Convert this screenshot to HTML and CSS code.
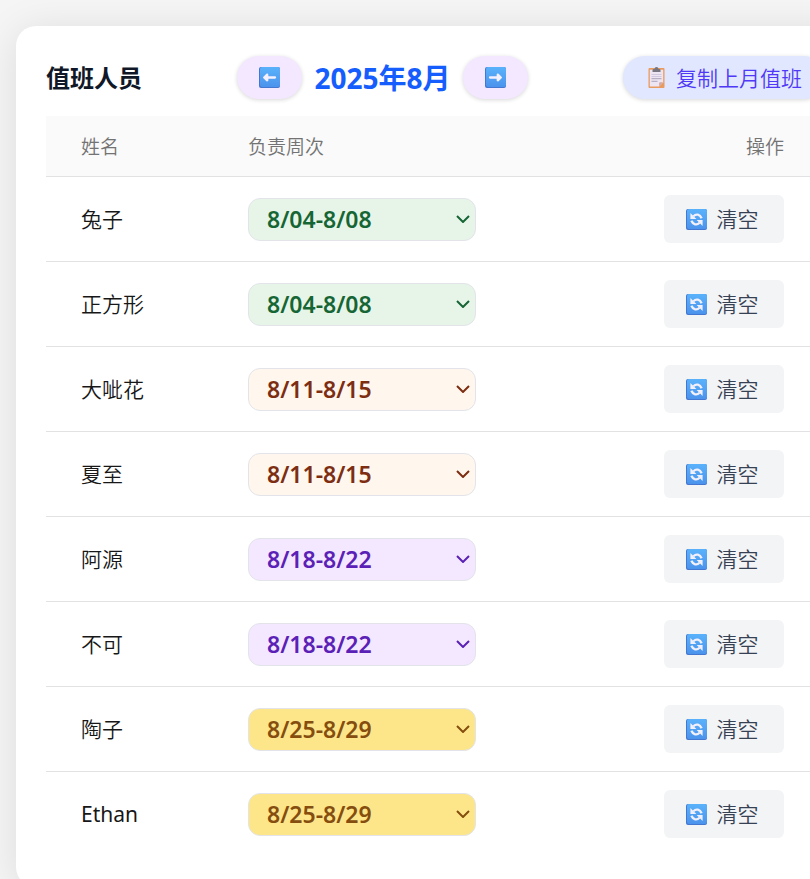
FILE: index.html
```html
<!DOCTYPE html>
<html lang="zh-CN">
<head>
<meta charset="utf-8">
<meta name="viewport" content="width=device-width, initial-scale=1">
<title>值班人员</title>
<link rel="stylesheet" href="styles.css">
</head>
<body>
<svg class="sprite" aria-hidden="true">
  <defs>
    <linearGradient id="tile" x1="0" y1="0" x2="0" y2="1">
      <stop offset="0" stop-color="#5ab2fb"/>
      <stop offset="1" stop-color="#4b93ec"/>
    </linearGradient>
    <symbol id="i-base" viewBox="0 0 21 21">
      <rect width="21" height="21" rx="2" fill="#4477cf"/>
      <rect x="1" width="20" height="20" rx="2" fill="url(#tile)"/>
    </symbol>
    <symbol id="i-left" viewBox="0 0 21 21">
      <use href="#i-base"/>
      <path d="M16 10.5H6M8.200 7.700L5.200 10.500L8.200 13.300Z" fill="#f5f0fd" stroke="#f5f0fd" stroke-width="2.300" stroke-linecap="round" stroke-linejoin="round"/>
    </symbol>
    <symbol id="i-right" viewBox="0 0 21 21">
      <use href="#i-base"/>
      <path d="M5 10.5H15M12.800 7.700L15.800 10.500L12.800 13.300Z" fill="#f5f0fd" stroke="#f5f0fd" stroke-width="2.300" stroke-linecap="round" stroke-linejoin="round"/>
    </symbol>
    <symbol id="i-cycle" viewBox="0 0 21 21">
      <use href="#i-base"/>
      <path d="M7.5 7.2C10 4.6 14 5.2 15.6 9.2M13.5 13.8C11 16.4 7 15.8 5.4 11.8" fill="none" stroke="#f2f0fb" stroke-width="2.3"/>
      <path d="M4.4 4V10H10.4ZM16.6 17V11H10.6Z" fill="#f2f0fb"/>
    </symbol>
    <symbol id="i-clip" viewBox="0 0 16 21">
      <rect y="1" width="16" height="20" rx="1" fill="#e99a5f"/>
      <path d="M1.3 2.8H14.7V15.2L10.6 19.6H1.3Z" fill="#eee5f3"/>
      <path d="M10.6 19.6V16.2Q10.6 15.2 11.6 15.2H14.7Z" fill="#cfa9a6"/>
      <path d="M4 5V3.2Q4 2 5.2 2H6Q6 0 8 0T10 2H10.800Q12 2 12 3.200V5Z" fill="#77767f"/>
      <path d="M3 7.500H13M3 9.500H13" stroke="#d0c9df" stroke-width="1.200"/>
      <path d="M3 11.700H13M3 14.300H9" stroke="#a9a2b8" stroke-width="1"/>
    </symbol>
    <symbol id="i-chevron" viewBox="0 0 14 8">
      <path d="M1 1L7 7L13 1" fill="none" stroke="currentColor" stroke-width="2"/>
    </symbol>
  </defs>
</svg>

<main class="card">
  <header class="toolbar">
    <h1 class="title">值班人员</h1>
    <nav class="month-nav" aria-label="月份">
      <button class="pill pill-nav" type="button" aria-label="上个月"><svg class="icon"><use href="#i-left"/></svg></button>
      <h2 class="month">2025年8月</h2>
      <button class="pill pill-nav" type="button" aria-label="下个月"><svg class="icon"><use href="#i-right"/></svg></button>
    </nav>
    <button class="pill pill-copy" type="button"><svg class="icon"><use href="#i-clip"/></svg><span class="btn-text">复制上月值班</span></button>
  </header>

  <table class="roster">
    <thead>
      <tr><th class="col-name" scope="col">姓名</th><th class="col-week" scope="col">负责周次</th><th class="col-action" scope="col">操作</th></tr>
    </thead>
    <tbody>
      <tr>
        <td><label for="w1">兔子</label></td>
        <td><div class="week week-green"><select id="w1"><option>8/04-8/08</option></select><svg class="chevron"><use href="#i-chevron"/></svg></div></td>
        <td class="col-action"><button class="clear" type="button"><svg class="icon"><use href="#i-cycle"/></svg><span class="btn-text">清空</span></button></td>
      </tr>
      <tr>
        <td><label for="w2">正方形</label></td>
        <td><div class="week week-green"><select id="w2"><option>8/04-8/08</option></select><svg class="chevron"><use href="#i-chevron"/></svg></div></td>
        <td class="col-action"><button class="clear" type="button"><svg class="icon"><use href="#i-cycle"/></svg><span class="btn-text">清空</span></button></td>
      </tr>
      <tr>
        <td><label for="w3">大呲花</label></td>
        <td><div class="week week-orange"><select id="w3"><option>8/11-8/15</option></select><svg class="chevron"><use href="#i-chevron"/></svg></div></td>
        <td class="col-action"><button class="clear" type="button"><svg class="icon"><use href="#i-cycle"/></svg><span class="btn-text">清空</span></button></td>
      </tr>
      <tr>
        <td><label for="w4">夏至</label></td>
        <td><div class="week week-orange"><select id="w4"><option>8/11-8/15</option></select><svg class="chevron"><use href="#i-chevron"/></svg></div></td>
        <td class="col-action"><button class="clear" type="button"><svg class="icon"><use href="#i-cycle"/></svg><span class="btn-text">清空</span></button></td>
      </tr>
      <tr>
        <td><label for="w5">阿源</label></td>
        <td><div class="week week-purple"><select id="w5"><option>8/18-8/22</option></select><svg class="chevron"><use href="#i-chevron"/></svg></div></td>
        <td class="col-action"><button class="clear" type="button"><svg class="icon"><use href="#i-cycle"/></svg><span class="btn-text">清空</span></button></td>
      </tr>
      <tr>
        <td><label for="w6">不可</label></td>
        <td><div class="week week-purple"><select id="w6"><option>8/18-8/22</option></select><svg class="chevron"><use href="#i-chevron"/></svg></div></td>
        <td class="col-action"><button class="clear" type="button"><svg class="icon"><use href="#i-cycle"/></svg><span class="btn-text">清空</span></button></td>
      </tr>
      <tr>
        <td><label for="w7">陶子</label></td>
        <td><div class="week week-yellow"><select id="w7"><option>8/25-8/29</option></select><svg class="chevron"><use href="#i-chevron"/></svg></div></td>
        <td class="col-action"><button class="clear" type="button"><svg class="icon"><use href="#i-cycle"/></svg><span class="btn-text">清空</span></button></td>
      </tr>
      <tr>
        <td><label class="latin" for="w8">Ethan</label></td>
        <td><div class="week week-yellow"><select id="w8"><option>8/25-8/29</option></select><svg class="chevron"><use href="#i-chevron"/></svg></div></td>
        <td class="col-action"><button class="clear" type="button"><svg class="icon"><use href="#i-cycle"/></svg><span class="btn-text">清空</span></button></td>
      </tr>
    </tbody>
  </table>
</main>
</body>
</html>
```
FILE: styles.css
```css
* {
  box-sizing: border-box;
}

body {
  margin: 0;
  padding: 26px 16px;
  overflow-x: hidden;
  background: #f5f5f5;
  color: #171717;
  font-family: "Noto Sans", "Noto Sans CJK SC", sans-serif;
  font-size: 21px;
}

button,
select {
  font: inherit;
  cursor: pointer;
}

.sprite {
  position: absolute;
  width: 0;
  height: 0;
}

.card {
  min-width: 839px;
  padding: 30px;
  background: #fff;
  border-radius: 20px;
  box-shadow: 0 4px 40px rgba(0, 0, 0, 0.1);
}

.toolbar {
  display: flex;
  align-items: center;
  justify-content: space-between;
  margin-bottom: 17px;
}

.title {
  margin: 0;
  color: #101828;
  font-size: 24px;
  line-height: 32px;
  font-weight: 700;
}

.month-nav {
  display: flex;
  align-items: center;
  gap: 12px;
}

.month {
  margin: 0;
  color: #155dfc;
  font-size: 28px;
  line-height: 40px;
  font-weight: 700;
}

.pill {
  display: flex;
  align-items: center;
  justify-content: center;
  height: 43px;
  padding: 0 22px;
  border: 0;
  border-radius: 22px;
  box-shadow: 0 1px 4px rgba(0, 0, 0, 0.16);
}

.pill-nav {
  background: #f3e8ff;
}

.pill-copy {
  gap: 9px;
  padding: 0 23px;
  background: #e0e7ff;
  color: #4f39f6;
  font-weight: 350;
}

.icon {
  display: block;
  flex: none;
  width: 21px;
  height: 21px;
}

.btn-text {
  padding-bottom: 2px;
}

.roster {
  width: 100%;
  border-collapse: separate;
  border-spacing: 0;
  table-layout: fixed;
}

.roster th,
.roster td {
  padding: 0 0 0 35px;
  border-bottom: 1px solid #e2e2e4;
  text-align: left;
}

.roster th {
  height: 61px;
  background: #fafafa;
  color: #737373;
  font-size: 19px;
  font-weight: 350;
}

.roster td {
  height: 85px;
  font-weight: 350;
}

.roster label {
  display: block;
  padding-bottom: 2px;
}

.roster .latin {
  padding-bottom: 0;
  font-weight: 400;
}

.roster tbody tr:last-child td {
  border-bottom-color: transparent;
}

.roster .col-name {
  width: 167px;
}

.roster .col-week {
  width: 298px;
}

.roster .col-action {
  padding-right: 41px;
  text-align: right;
}

.week {
  position: relative;
  width: 228px;
}

.week select {
  display: block;
  width: 100%;
  height: 43px;
  padding: 0 18px;
  appearance: none;
  border: 1px solid #e2e4ea;
  border-radius: 12px;
  background: transparent;
  color: inherit;
  font-size: 23px;
  font-weight: 600;
}

.chevron {
  position: absolute;
  top: 17px;
  right: 6px;
  width: 14px;
  height: 8px;
  pointer-events: none;
}

.week-green { color: #166534; }
.week-green select { background: #e7f5e9; }
.week-orange { color: #7c2d12; }
.week-orange select { background: #fff7ed; }
.week-purple { color: #5b21b6; }
.week-purple select { background: #f3e8ff; }
.week-yellow { color: #854d0e; }
.week-yellow select { background: #fde68a; }

.clear {
  display: inline-flex;
  align-items: center;
  justify-content: center;
  gap: 10px;
  width: 120px;
  height: 48px;
  padding: 0 4px 0 0;
  border: 0;
  border-radius: 6px;
  background: #f3f4f6;
  color: #364153;
  font-weight: 350;
  vertical-align: middle;
}
```
